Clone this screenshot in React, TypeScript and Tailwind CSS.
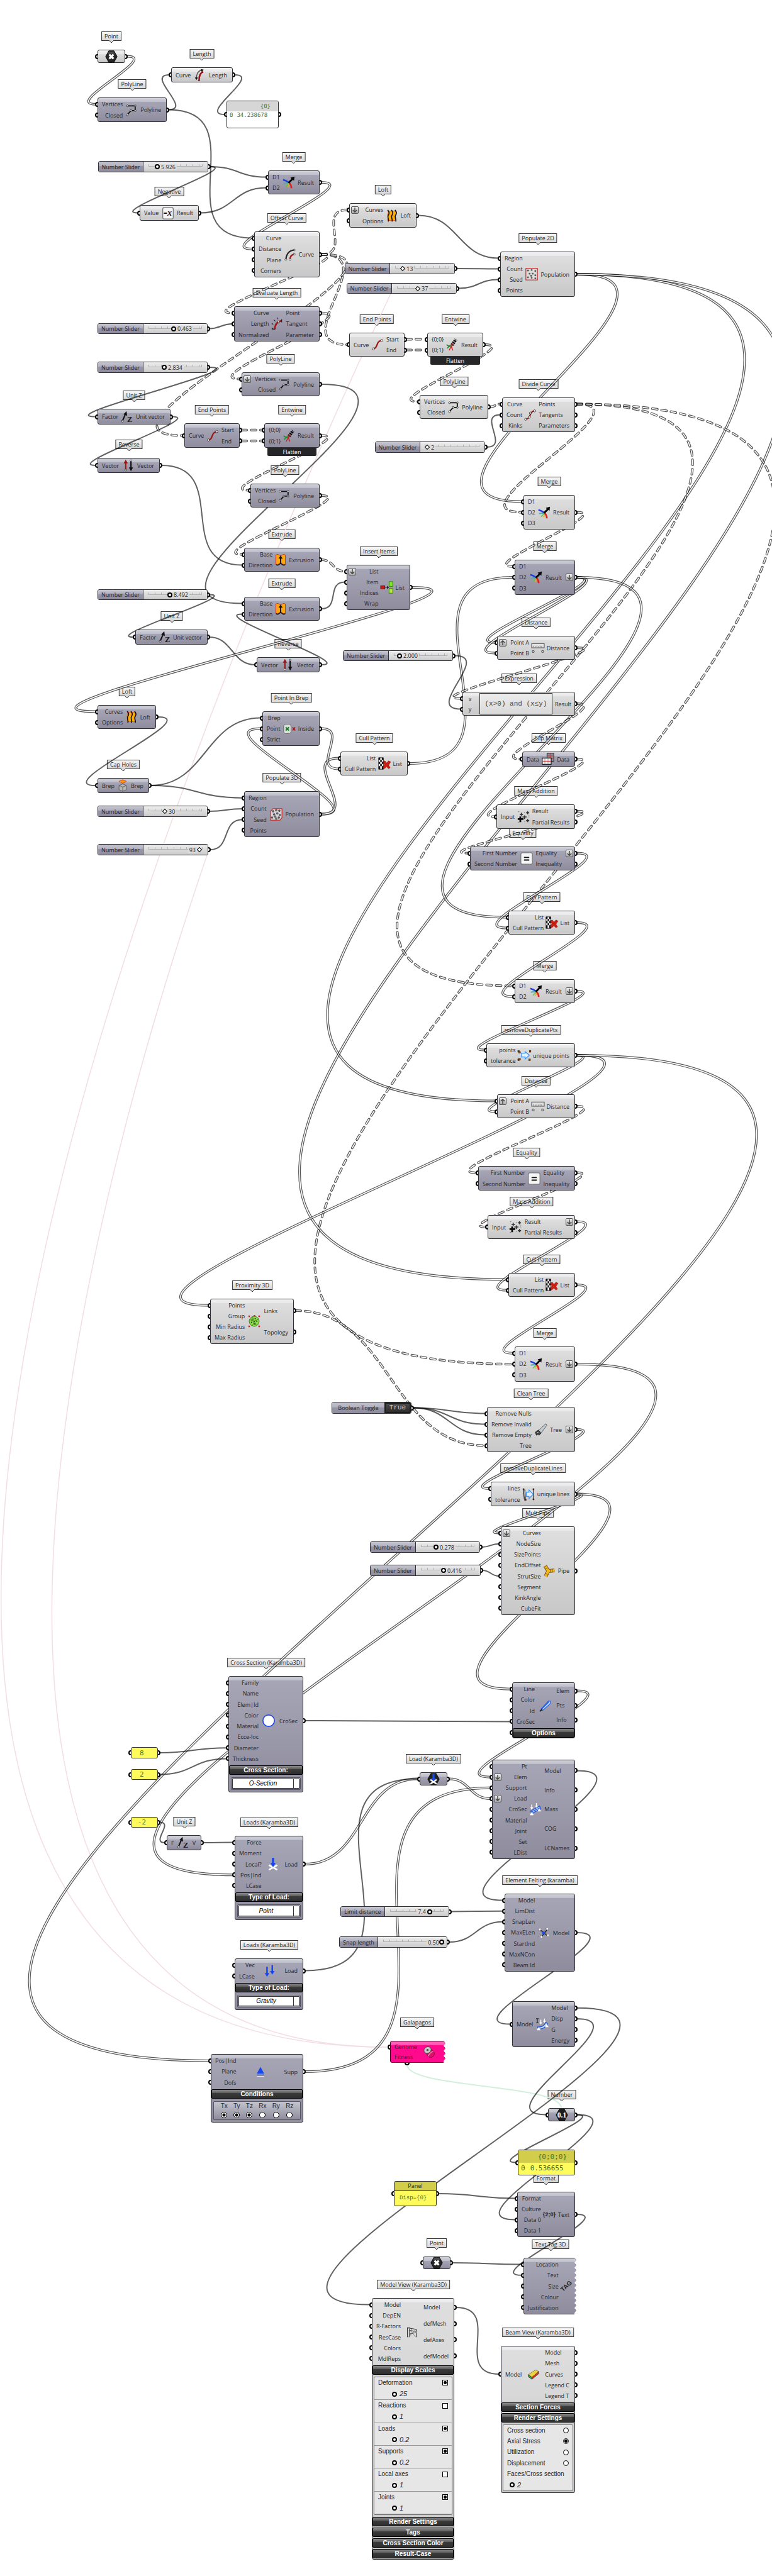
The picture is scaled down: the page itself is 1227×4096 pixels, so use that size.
import type { CSSProperties, ReactNode } from 'react';
import clsx from 'clsx';

/* Graph coordinates are canvas units; ZOOM is the canvas zoom level. */
const ZOOM = 0.818;
const px = (v: number) => Math.round(v * ZOOM);

type Box = { x: number; y: number; w: number; h: number };
type Tone = 'light' | 'dark';

const box = (x1: number, y1: number, x2: number, y2: number): Box => ({
  x: px(x1),
  y: px(y1),
  w: px(x2) - px(x1),
  h: px(y2) - px(y1),
});

const place = (b: Box): CSSProperties => ({ left: b.x, top: b.y, width: b.w, height: b.h });

/* ------------------------------------------------------------------ icons */

const dot = (x: number, y: number, r = 1.7) => (
  <circle cx={x} cy={y} r={r} fill="#fff" stroke="#222" strokeWidth="1" />
);

const HEX = 'M7 1h10l6 11-6 11H7L1 12z';

const icons: Record<string, ReactNode> = {
  point: (
    <>
      <path d={HEX} fill="#262626" stroke="#000" />
      <path d="M7.5 2h9l2.5 5H5z" fill="#666" opacity=".6" />
      <path d="M8 8l8 8M16 8l-8 8" stroke="#fff" strokeWidth="4" />
    </>
  ),
  loadHex: (
    <>
      <path d={HEX} fill="#222" stroke="#000" />
      <path d="M6 21l12-8M18 21L6 13" stroke="#fff" strokeWidth="3" />
      <path d="M10 2h4v8h3l-5 6-5-6h3z" fill="#1746f0" />
    </>
  ),
  number: (
    <>
      <path d={HEX} fill="#1c1c1c" stroke="#000" />
      <text x="12" y="17" textAnchor="middle" fontSize="14" fontWeight="700" fontFamily="Liberation Serif, serif" fill="#fff">0.1</text>
    </>
  ),
  length: (
    <>
      <path d="M14 3C8 5 5 11 5 19" fill="none" stroke="#555" strokeWidth="1.6" />
      <path d="M13 1l6 1-4 4zM2 17h6l-3 5z" fill="#111" />
      <path d="M10 23c0-9 2-15 8-17" fill="none" stroke="#9b1515" strokeWidth="3" />
      <path d="M8 23h4M17 4v4" stroke="#5a0b0b" />
    </>
  ),
  polyline: (
    <>
      <path d="M4 4h15v9h-8L4 21" fill="none" stroke="#111" strokeWidth="2.2" />
      {dot(4, 4)}{dot(19, 4)}{dot(19, 13)}{dot(11, 13)}{dot(4, 21)}
    </>
  ),
  merge: (
    <>
      <path d="M1 7c4 1 8 3 12 6" fill="none" stroke="#1d3fe0" strokeWidth="3" />
      <path d="M2 14c4-1 7-1 10 0" fill="none" stroke="#4fb0a8" strokeWidth="2.4" />
      <path d="M6 20c2-3 4-5 7-6" fill="none" stroke="#6cc24a" strokeWidth="2" />
      <path d="M11 21l2-7" fill="none" stroke="#e8b01c" strokeWidth="2" />
      <path d="M17 23c0-4-1-7-4-10" fill="none" stroke="#e02018" strokeWidth="3" />
      <path d="M10 12l7-7-2-2 8-2-1 8-2-2-7 7z" fill="#080808" />
    </>
  ),
  negative: (
    <>
      <rect x="2" y="1" width="20" height="22" rx="3" fill="#f4f4f4" stroke="#777" strokeWidth="1.5" />
      <path d="M4 12h6" stroke="#111" strokeWidth="2.4" />
      <text x="15" y="17" textAnchor="middle" fontSize="17" fontStyle="italic" fontWeight="700" fontFamily="Liberation Serif, serif" fill="#111">x</text>
    </>
  ),
  offset: (
    <>
      <path d="M4 21C5 11 10 4 20 3" fill="none" stroke="#222" strokeWidth="2.6" />
      <path d="M12 21c0-5 3-9 8-10" fill="none" stroke="#a01818" strokeWidth="2.6" />
      {dot(4, 21)}{dot(20, 3)}{dot(12, 21)}{dot(20, 11)}
    </>
  ),
  loft: (
    <>
      <path d="M4 3c3 3-2 6 0 9s-1 6 0 9h14c3-3-2-6 0-9s3-6 0-9z" fill="#ffab0a" stroke="#e0541a" />
      <path d="M4 1c2 4 4 5 1 10s2 6 0 12M11 1c2 4 4 5 1 10s2 6 0 12M18 1c2 4 4 5 1 10s2 6 0 12" fill="none" stroke="#111" strokeWidth="2" />
    </>
  ),
  evaluate: (
    <>
      <path d="M7 22c0-8 3-14 13-16" fill="none" stroke="#a01818" strokeWidth="3" />
      <path d="M4 20l-3 2M4 13l-3-2M8 7L5 4M13 3l-1-3M2 22h6M20 3v6" stroke="#222" strokeWidth="1.4" />
      {dot(14, 8)}
    </>
  ),
  endPoints: (
    <>
      <path d="M4 20c10-1 4-15 16-16" fill="none" stroke="#9b1515" strokeWidth="2.6" />
      {dot(4, 20, 2)}{dot(20, 4, 2)}
    </>
  ),
  divide: (
    <>
      <path d="M3 20c11-1 6-15 17-16" fill="none" stroke="#9b1515" strokeWidth="2.6" />
      {dot(3, 20, 2)}{dot(10, 16, 2)}{dot(12, 8, 2)}{dot(20, 4, 2)}
    </>
  ),
  entwine: (
    <>
      <path d="M11 13l8-11" stroke="#111" strokeWidth="6" strokeDasharray="3 1.2" />
      <path d="M9 15l5-6" stroke="#b01c1c" strokeWidth="4" strokeDasharray="2 1.5" />
      <path d="M1 12c3 4 6 2 9 2M2 19c3-5 6-4 8-5" fill="none" stroke="#1e8a2c" strokeWidth="2" />
      <path d="M6 23c1-4 3-5 4-8 1 3 1 5 3 8" fill="none" stroke="#d02020" strokeWidth="1.8" />
    </>
  ),
  populate: (
    <>
      <rect x="1" y="1" width="22" height="22" fill="#dcdcdc" stroke="#c22" strokeWidth="1.4" />
      {[[5, 5], [12, 4], [19, 6], [8, 11], [14, 11], [19, 14], [5, 18], [12, 19], [19, 20], [11, 15]].map(([x, y]) => (
        <circle key={`${x}-${y}`} cx={x} cy={y} r="1.7" fill="#555" />
      ))}
    </>
  ),
  populate3: (
    <>
      <path d="M6 1h17v17l-4 5H1V6z" fill="#d4d4d8" stroke="#c22" strokeWidth="1.4" />
      {[[6, 6], [12, 4], [18, 5], [8, 12], [14, 10], [19, 13], [4, 18], [12, 20], [17, 18], [10, 16]].map(([x, y]) => (
        <circle key={`${x}-${y}`} cx={x} cy={y} r="1.7" fill="#777" stroke="#222" strokeWidth=".7" />
      ))}
    </>
  ),
  unitZ: (
    <>
      <path d="M3 20L9 6" stroke="#111" strokeWidth="2.4" />
      <path d="M5 7l6-6 1 9z" fill="#111" />
      {dot(3, 20, 1.8)}
      <text x="17" y="22" textAnchor="middle" fontSize="15" fontWeight="700" fontFamily="Liberation Serif, serif" fill="#1d1d1d">Z</text>
    </>
  ),
  reverse: (
    <>
      <path d="M7 20V6" stroke="#9b1515" strokeWidth="2.6" />
      <path d="M3 8l4-7 4 7z" fill="#9b1515" />
      <path d="M17 4v14" stroke="#111" strokeWidth="2.6" />
      <path d="M13 16l4 7 4-7z" fill="#111" />
      {dot(7, 21)}{dot(17, 3)}
    </>
  ),
  extrude: (
    <>
      <path d="M3 3q3-3 6 0t6 0 6 0v17q-3 3-6 0t-6 0-6 0z" fill="#ffa50e" stroke="#c9341a" strokeWidth="1.2" />
      <path d="M3 21q3 3 6 0t6 0 6 0" fill="none" stroke="#111" strokeWidth="2" />
      <path d="M12 20V9" stroke="#111" strokeWidth="2.4" />
      <path d="M8 10l4-6 4 6z" fill="#111" />
    </>
  ),
  insert: (
    <>
      <rect x="0" y="9" width="8" height="6" fill="#c81c1c" stroke="#5c0c0c" />
      <path d="M8 12h6" stroke="#222" />
      <path d="M12 9l4 3-4 3z" fill="#222" />
      <rect x="16" y="1" width="7" height="9" fill="#7ee81c" stroke="#2d7a0a" />
      <rect x="16" y="14" width="7" height="9" fill="#b8e83c" stroke="#2d7a0a" />
    </>
  ),
  cap: (
    <>
      <path d="M5 4l7-3 7 3-7 4z" fill="#ff9a10" stroke="#c9341a" />
      <path d="M5 12l7-3 7 3v8l-7 3-7-3z" fill="#b5b5b5" stroke="#555" />
      <path d="M5 12l7 3 7-3M12 15v8" fill="none" stroke="#555" />
    </>
  ),
  pointInBrep: (
    <>
      <rect x="1" y="3" width="14" height="18" rx="4" fill="#d9dde0" stroke="#555" />
      <path d="M5 9l6 6M11 9l-6 6" stroke="#157a15" strokeWidth="2.4" />
      <path d="M18 9l5 6M23 9l-5 6" stroke="#a01818" strokeWidth="2.2" />
    </>
  ),
  cull: (
    <>
      <path d="M1 1h9v22H1z" fill="#fff" stroke="#111" />
      <path d="M1 1h3v4H1zM7 1h3v4H7zM4 5h3v4H4zM1 9h3v4H1zM7 9h3v4H7zM4 13h3v4H4zM1 17h3v6H1zM7 17h3v6H7z" fill="#111" />
      <path d="M9 8l4-1 3 4 4-4 4 2-4 6 3 5-3 2-4-4-4 4-3-2 3-6z" fill="#cf1d12" stroke="#7a0b06" strokeWidth=".6" />
    </>
  ),
  distance: (
    <>
      <rect x="0" y="4" width="24" height="8" fill="#e2e2e2" stroke="#555" strokeWidth="1.3" />
      <path d="M4 8v3M7 9v2M10 8v3M13 9v2M16 8v3M19 9v2" stroke="#555" />
      <circle cx="3" cy="19" r="2" fill="none" stroke="#555" strokeWidth="1.3" />
      <circle cx="21" cy="19" r="2" fill="none" stroke="#555" strokeWidth="1.3" />
    </>
  ),
  flip: (
    <>
      <rect x="10" y="1" width="13" height="15" fill="#8d8d98" stroke="#111" />
      <path d="M16 1v15M10 6h13M10 11h13" stroke="#c22" strokeWidth=".9" />
      <rect x="1" y="10" width="17" height="12" fill="#f3f3f3" stroke="#111" strokeWidth="1.4" />
      <path d="M6 10v12M12 10v12" stroke="#555" strokeWidth=".6" />
      <path d="M2 16h15" stroke="#c22" strokeWidth="1.2" />
    </>
  ),
  mass: (
    <>
      <path d="M6 11v11M1 16h11" stroke="#0b0b0b" strokeWidth="3.4" />
      <path d="M14 9v7M10 12h8M20 1v6M17 4h6M20 16v6M17 19h6M8 4v6M5 7h6" stroke="#333" strokeWidth="2" />
      <path d="M2 2h2M2 22h2M13 4h2M22 12h1M13 20h2M22 9h1" stroke="#777" strokeWidth="1.6" />
    </>
  ),
  equality: (
    <>
      <rect x="1" y="1" width="22" height="22" rx="3" fill="#f5f5f5" stroke="#777" strokeWidth="1.5" />
      <path d="M7 10h10M7 15h10" stroke="#111" strokeWidth="2.2" />
    </>
  ),
  dupPts: (
    <>
      <path d="M7 8h7V5l8 7-8 7v-4H7z" fill="#e6f1ff" stroke="#3f93ee" strokeWidth="1.5" />
      {[[0, 3], [2, 5], [22, 3], [0, 19], [2, 18], [21, 19]].map(([x, y]) => (
        <rect key={`${x}-${y}`} x={x} y={y} width="3" height="3" fill="#8a4a14" stroke="#2b1505" strokeWidth=".7" />
      ))}
    </>
  ),
  dupLines: (
    <>
      <path d="M2 2l2 19M5 3l1 19M22 2v19" stroke="#222" strokeWidth="1.5" />
      <path d="M8 8h5V4l8 8-8 8v-4H8z" fill="#e6f1ff" stroke="#3f93ee" strokeWidth="1.5" />
      <path d="M1 1h3v3H1zM4 21h4v3H4zM20 1h3v3h-3zM20 20h3v3h-3z" fill="#4a1c10" />
    </>
  ),
  proximity: (
    <>
      <path d="M1 1h3v3H1zM20 1h3v3h-3zM1 20h3v3H1zM20 20h3v3h-3zM11 0h3v3h-3z" fill="#d42020" />
      <circle cx="12" cy="12" r="9.5" fill="#8fdc4a" stroke="#2d6b10" />
      <path d="M4 9l8 3 8-4M12 12l-3 8M12 12l4 7M12 12L9 4" stroke="#2d6b10" fill="none" />
      {[[8, 8], [14, 7], [17, 12], [7, 14], [13, 17], [12, 12]].map(([x, y]) => (
        <circle key={`${x}-${y}`} cx={x} cy={y} r="1.3" fill="#23500c" />
      ))}
    </>
  ),
  saw: (
    <>
      <path d="M7 14L21 1l2 3L11 20z" fill="#c5cbd2" stroke="#444" />
      <path d="M1 17l6-4 5 6-4 4-2-2-3 2z" fill="#3c4046" stroke="#222" />
      <path d="M4 18l3-1" stroke="#fff" />
    </>
  ),
  multiPipe: (
    <>
      <path d="M4 2l6 10M10 12l12-1M10 12L5 22" stroke="#6e4b06" strokeWidth="7" />
      <path d="M4 2l6 10M10 12l12-1M10 12L5 22" stroke="#f5b81c" strokeWidth="5" />
      <path d="M2 5l5-3M4 9l5-3M14 9v5M18 8v6M4 16l5 3" stroke="#6e4b06" />
    </>
  ),
  ring: <circle cx="12" cy="12" r="11" fill="#fff" stroke="#1d46e8" strokeWidth="2" />,
  pointLoad: (
    <>
      <path d="M4 23l16-9M20 23L4 14" stroke="#fff" strokeWidth="3.2" />
      <path d="M10 0h4v10h3l-5 8-5-8h3z" fill="#1746f0" />
    </>
  ),
  gravity: <path d="M5 4h3v12h3l-4.5 7L2 16h3zM15 1h3v11h3l-4.5 7L12 12h3z" fill="#1746f0" />,
  support: (
    <>
      <path d="M12 3l7 13H5z" fill="#1746f0" />
      <path d="M5 18.5h14" stroke="#1746f0" strokeWidth="1.6" />
      <path d="M5 21h14" stroke="#e8e8ee" strokeWidth="1.6" />
    </>
  ),
  galapagos: (
    <>
      <ellipse cx="15" cy="15" rx="7" ry="7" fill="#e0146e" stroke="#5c0a2c" />
      <path d="M10 20c3-6 7-9 10-9" stroke="#fff" fill="none" />
      <ellipse cx="9" cy="8" rx="7" ry="6" fill="#c9c9c9" stroke="#444" transform="rotate(-30 9 8)" />
      <circle cx="9" cy="8" r="2" fill="#444" />
    </>
  ),
  beam: (
    <>
      <path d="M3 19L18 3l4 1-1 4L7 21z" fill="#cfe0ff" stroke="#2b62e0" strokeWidth="1.4" />
      <path d="M5 18L19 4" stroke="#2b62e0" strokeWidth="2.4" />
      <path d="M1 23l5-4" stroke="#111" strokeWidth="2" />
    </>
  ),
  assemble: (
    <>
      <path d="M3 15L20 6l2 5-17 9z" fill="#cfe0ff" stroke="#1d50e0" strokeWidth="1.5" />
      <path d="M4 17l17-8" stroke="#1d50e0" strokeWidth="1.5" />
      <path d="M5 3v6M14 0v6" stroke="#fff" strokeWidth="1.8" />
      <path d="M2 8h6l-3 5zM11 5h6l-3 4zM5 17l4 6H1zM19 10l4 6h-7z" fill="#fff" />
    </>
  ),
  felting: (
    <>
      <path d="M1 20l22-14M1 8l22 8M8 22L17 2" stroke="#777" strokeWidth="1" strokeDasharray="3 1.5" />
      <path d="M5 6l14 12M19 6L8 20" stroke="#222" strokeWidth="1.8" />
      <circle cx="12" cy="12.5" r="2.8" fill="#1746f0" />
      {[[5, 6], [19, 5], [20, 17], [8, 20]].map(([x, y]) => (
        <rect key={`${x}-${y}`} x={x - 1.5} y={y - 1.5} width="3" height="3" fill="#fff" />
      ))}
    </>
  ),
  analyze: (
    <>
      <path d="M3 17c8 0 12-2 16-9l3 3c-4 7-9 10-17 10z" fill="#cfe0ff" stroke="#1d50e0" strokeWidth="1.5" />
      <path d="M9 3v6M16 1v5" stroke="#fff" strokeWidth="1.8" />
      <path d="M6 8h6l-3 4zM13 5h6l-3 4zM5 17l4 6H1zM20 11l4 6h-7z" fill="#fff" />
      <path d="M0 1h5M2.5 1v8M0 9h5" stroke="#222" strokeWidth="1.3" />
    </>
  ),
  format: (
    <text x="12" y="16" textAnchor="middle" fontSize="11" fontWeight="700" fontFamily="Liberation Sans, sans-serif" fill="#222">{'{2;0}'}</text>
  ),
  tag: (
    <text x="12" y="16" textAnchor="middle" fontSize="12" fontWeight="700" fontFamily="Liberation Sans, sans-serif" fill="#222" transform="rotate(-42 12 12)">TAG</text>
  ),
  modelView: (
    <>
      <path d="M3 22V4h4v18M3 4l17 3v4L7 9M7 16l13-3v9" fill="none" stroke="#333" strokeWidth="1.3" />
      <path d="M5 4l14 18M19 7L5 22" stroke="#777" />
      <rect x="7" y="6" width="3" height="3" fill="#fff" stroke="#333" strokeWidth=".8" />
    </>
  ),
  beamView: (
    <>
      <path d="M2 13l14-9 6 3-13 11z" fill="#f0d43a" stroke="#555" strokeWidth=".8" />
      <path d="M2 13l7 5v4l-7-5z" fill="#38a047" stroke="#333" strokeWidth=".8" />
      <path d="M9 18l13-11v4L9 22z" fill="#d83a2a" stroke="#333" strokeWidth=".8" />
    </>
  ),
};

const Icon = ({ name, wide }: { name: string; wide?: boolean }) => (
  <svg viewBox="0 0 24 24" aria-hidden="true" className={clsx('h-5 shrink-0 overflow-visible', wide ? 'w-6' : 'w-5')}>
    {icons[name]}
  </svg>
);

/* ------------------------------------------------------------------- data */

type NodeSpec = {
  id: string;
  box: Box;
  body: number;
  tone: Tone;
  tag?: string;
  icon: string;
  ins: string[];
  outs: string[];
  flatIn: number[];
  graftIn: number[];
  flatOut: number[];
  torn: boolean;
};

type Extra = { flatIn?: number[]; graftIn?: number[]; flatOut?: number[]; body?: number; torn?: boolean };

const node = (
  id: string,
  tone: Tone,
  tag: string | undefined,
  r: [number, number, number, number],
  ins: string[],
  icon: string,
  outs: string[],
  e: Extra = {},
): NodeSpec => {
  const b = box(...r);
  return {
    id, tone, tag, icon, ins, outs, box: b,
    body: e.body ? px(e.body) : b.h,
    flatIn: e.flatIn ?? [],
    graftIn: e.graftIn ?? [],
    flatOut: e.flatOut ?? [],
    torn: e.torn ?? false,
  };
};

const R = 1117.3;

const nodes: NodeSpec[] = [
  node('pt1', 'light', 'Point', [189.6, 96, 242.8, 121.7], [''], 'point', ['']),
  node('len', 'light', 'Length', [333, 131, 452.6, 160.7], ['Curve'], 'length', ['Length']),
  node('pl1', 'dark', 'PolyLine', [189.6, 190, 323.6, 236.7], ['Vertices', 'Closed'], 'polyline', ['Polyline']),
  node('mrg1', 'dark', 'Merge', [520.4, 331, 621, 377.7], ['D1', 'D2'], 'merge', ['Result']),
  node('neg', 'light', 'Negative', [271.8, 398.3, 386, 428.7], ['Value'], 'negative', ['Result']),
  node('off', 'light', 'Offset Curve', [494, 450.3, 621, 539], ['Curve', 'Distance', 'Plane', 'Corners'], 'offset', ['Curve']),
  node('loft1', 'light', 'Loft', [678.5, 395.3, 809.7, 442.3], ['Curves', 'Options'], 'loft', ['Loft'], { flatIn: [0] }),
  node('pop2', 'light', 'Populate 2D', [971.4, 488.6, 1117.2, 577.3], ['Region', 'Count', 'Seed', 'Points'], 'populate', ['Population']),
  node('evl', 'dark', 'Evaluate Length', [455.3, 595.7, 621, 663.3], ['Curve', 'Length', 'Normalized'], 'evaluate', ['Point', 'Tangent', 'Parameter']),
  node('ep2', 'light', 'End Points', [678.2, 646.6, 786.6, 692.6], ['Curve'], 'endPoints', ['Start', 'End']),
  node('ent2', 'light', 'Entwine', [830, 646.6, 938.3, 692.6], ['{0;0}', '{0;1}'], 'entwine', ['Result']),
  node('pl2', 'light', 'PolyLine', [814.8, 767.6, 949.2, 814], ['Vertices', 'Closed'], 'polyline', ['Polyline']),
  node('div', 'light', 'Divide Curve', [975.7, 773, 1117.2, 840.2], ['Curve', 'Count', 'Kinks'], 'divide', ['Points', 'Tangents', 'Parameters']),
  node('pl3', 'dark', 'PolyLine', [470, 724, 621, 770.7], ['Vertices', 'Closed'], 'polyline', ['Polyline'], { flatIn: [0] }),
  node('uz1', 'dark', 'Unit Z', [189.6, 794.7, 331, 824.7], ['Factor'], 'unitZ', ['Unit vector']),
  node('ep1', 'dark', 'End Points', [358, 823.3, 466, 870], ['Curve'], 'endPoints', ['Start', 'End']),
  node('ent1', 'dark', 'Entwine', [513, 823.3, 621, 870], ['{0;0}', '{0;1}'], 'entwine', ['Result']),
  node('rev1', 'dark', 'Reverse', [189.6, 889.7, 311, 919.7], ['Vector'], 'reverse', ['Vector']),
  node('pl4', 'dark', 'PolyLine', [486.5, 940, 621, 986.7], ['Vertices', 'Closed'], 'polyline', ['Polyline']),
  node('mrg2', 'light', 'Merge', [1016.7, 962.3, R, 1029.6], ['D1', 'D2', 'D3'], 'merge', ['Result']),
  node('ext1', 'dark', 'Extrude', [474.4, 1064.3, 621, 1111.3], ['Base', 'Direction'], 'extrude', ['Extrusion']),
  node('ext2', 'dark', 'Extrude', [474.4, 1160.4, 621, 1207], ['Base', 'Direction'], 'extrude', ['Extrusion']),
  node('ins', 'dark', 'Insert Items', [673.2, 1097.6, 796.7, 1186], ['List', 'Item', 'Indices', 'Wrap'], 'insert', ['List'], { flatIn: [0] }),
  node('mrg3', 'dark', 'Merge', [1000, 1088.6, R, 1156.3], ['D1', 'D2', 'D3'], 'merge', ['Result'], { flatOut: [0] }),
  node('uz2', 'dark', 'Unit Z', [262.3, 1223.2, 404, 1253.6], ['Factor'], 'unitZ', ['Unit vector']),
  node('rev2', 'dark', 'Reverse', [499.2, 1277.5, 621, 1307], ['Vector'], 'reverse', ['Vector']),
  node('dist1', 'light', 'Distance', [966, 1235.9, R, 1282.6], ['Point A', 'Point B'], 'distance', ['Distance'], { graftIn: [0] }),
  node('loft2', 'dark', 'Loft', [189.3, 1370.3, 303.6, 1416.8], ['Curves', 'Options'], 'loft', ['Loft']),
  node('pib', 'dark', 'Point In Brep', [510.2, 1383, 621, 1450.2], ['Brep', 'Point', 'Strict'], 'pointInBrep', ['Inside']),
  node('cull0', 'light', 'Cull Pattern', [661.3, 1460.4, 791.7, 1507.4], ['List', 'Cull Pattern'], 'cull', ['List']),
  node('flip', 'dark', 'Flip Matrix', [1015, 1460.6, R, 1490.5], ['Data'], 'flip', ['Data']),
  node('cap', 'dark', 'Cap Holes', [189.3, 1512, 289.8, 1542], ['Brep'], 'cap', ['Brep']),
  node('pop3', 'dark', 'Populate 3D', [474.9, 1537.8, 621, 1626.7], ['Region', 'Count', 'Seed', 'Points'], 'populate3', ['Population']),
  node('mass1', 'light', 'Mass Addition', [964.3, 1563.7, R, 1610.7], ['Input'], 'mass', ['Result', 'Partial Results']),
  node('eq1', 'dark', 'Equality', [912.7, 1645.5, R, 1691.8], ['First Number', 'Second Number'], 'equality', ['Equality', 'Inequality'], { flatOut: [0] }),
  node('cull1', 'light', 'Cull Pattern', [987.3, 1770.5, R, 1817], ['List', 'Cull Pattern'], 'cull', ['List']),
  node('mrg4', 'light', 'Merge', [1000, 1903.3, R, 1950], ['D1', 'D2'], 'merge', ['Result'], { flatOut: [0] }),
  node('rdp', 'light', 'removeDuplicatePts', [945.3, 2027.9, R, 2074], ['points', 'tolerance'], 'dupPts', ['unique points']),
  node('dist2', 'light', 'Distance', [966, 2127.5, R, 2174.2], ['Point A', 'Point B'], 'distance', ['Distance'], { graftIn: [0] }),
  node('eq2', 'dark', 'Equality', [929.3, 2266.8, R, 2313.6], ['First Number', 'Second Number'], 'equality', ['Equality', 'Inequality']),
  node('mass2', 'light', 'Mass Addition', [947, 2361.8, R, 2408.2], ['Input'], 'mass', ['Result', 'Partial Results'], { flatOut: [0] }),
  node('cull2', 'light', 'Cull Pattern', [987.3, 2474.6, R, 2521], ['List', 'Cull Pattern'], 'cull', ['List']),
  node('prox', 'light', 'Proximity 3D', [408.4, 2524, 570.5, 2612.3], ['Points', 'Group', 'Min Radius', 'Max Radius'], 'proximity', ['Links', 'Topology']),
  node('mrg5', 'light', 'Merge', [1000, 2617.5, R, 2685.7], ['D1', 'D2', 'D3'], 'merge', ['Result'], { flatOut: [0] }),
  node('clean', 'light', 'Clean Tree', [946.2, 2735, R, 2823.2], ['Remove Nulls', 'Remove Invalid', 'Remove Empty', 'Tree'], 'saw', ['Tree'], { flatOut: [0] }),
  node('rdl', 'light', 'removeDuplicateLines', [953.6, 2880.8, R, 2927.5], ['lines', 'tolerance'], 'dupLines', ['unique lines']),
  node('mp', 'light', 'MultiPipe', [972.5, 2966.7, R, 3139], ['Curves', 'NodeSize', 'SizePoints', 'EndOffset', 'StrutSize', 'Segment', 'KinkAngle', 'CubeFit'], 'multiPipe', ['Pipe'], { flatIn: [0] }),
  node('crs', 'dark', 'Cross Section (Karamba3D)', [443.3, 3258.3, 589.3, 3484.3], ['Family', 'Name', 'Elem|Id', 'Color', 'Material', 'Ecce-loc', 'Diameter', 'Thickness'], 'ring', ['CroSec'], { body: 173.5 }),
  node('ltb', 'dark', undefined, [994.6, 3270, 1117, 3378.7], ['Line', 'Color', 'Id', 'CroSec'], 'beam', ['Elem', 'Pts', 'Info'], { body: 89 }),
  node('loadp', 'dark', 'Load (Karamba3D)', [815.4, 3444.7, 868.6, 3470.4], [''], 'loadHex', ['']),
  node('asm', 'dark', undefined, [955.7, 3421, 1117, 3614.3], ['Pt', 'Elem', 'Support', 'Load', 'CroSec', 'Material', 'Joint', 'Set', 'LDist'], 'assemble', ['Model', 'Info', 'Mass', 'COG', 'LCNames'], { flatIn: [1, 3] }),
  node('uz3', 'dark', 'Unit Z', [324.3, 3567, 391.3, 3596.7], ['F'], 'unitZ', ['V']),
  node('ld1', 'dark', 'Loads (Karamba3D)', [455.6, 3569, 589.4, 3731.7], ['Force', 'Moment', 'Local?', 'Pos|Ind', 'LCase'], 'pointLoad', ['Load'], { body: 110.2 }),
  node('felt', 'dark', 'Element Felting (karamba)', [980, 3680.8, 1117, 3832.6], ['Model', 'LimDist', 'SnapLen', 'MaxELen', 'StartInd', 'MaxNCon', 'Beam Id'], 'felting', ['Model']),
  node('ld2', 'dark', 'Loads (Karamba3D)', [455.6, 3807, 589.4, 3906.7], ['Vec', 'LCase'], 'gravity', ['Load'], { body: 47.5 }),
  node('ana', 'dark', undefined, [995.4, 3890.3, R, 3979.3], ['Model'], 'analyze', ['Model', 'Disp', 'G', 'Energy']),
  node('supp', 'dark', undefined, [410, 3992.5, 589.4, 4125.7], ['Pos|Ind', 'Plane', 'Dofs'], 'support', ['Supp'], { body: 68.5 }),
  node('num', 'dark', 'Number', [1064.2, 4098.3, R, 4123], [''], 'number', ['']),
  node('fmt', 'dark', 'Format', [1005.4, 4260.4, R, 4349], ['Format', 'Culture', 'Data 0', 'Data 1'], 'format', ['Text']),
  node('pt2', 'dark', 'Point', [821.8, 4385.8, 874.8, 4411], [''], 'point', ['']),
  node('ttag', 'dark', 'Text Tag 3D', [1016.7, 4389.3, 1121.4, 4499], ['Location', 'Text', 'Size', 'Colour', 'Justification'], 'tag', [], { torn: true }),
  node('mv', 'light', 'Model View (Karamba3D)', [722, 4467.6, 882.8, 4975], ['Model', 'DepEN', 'R-Factors', 'ResCase', 'Colors', 'MdlReps'], 'modelView', ['Model', 'defMesh', 'defAxes', 'defModel'], { body: 131 }),
  node('bv', 'light', 'Beam View (Karamba3D)', [973, 4560, R, 4846], ['Model'], 'beamView', ['Model', 'Mesh', 'Curves', 'Legend C', 'Legend T'], { body: 110 }),
];

type SliderSpec = { id: string; box: Box; name: string; nameW: number; knob: number; value: string; diamond: boolean; before: boolean };

const slider = (
  id: string,
  r: [number, number, number, number],
  divider: number,
  knob: number,
  value: string,
  opt: { name?: string; diamond?: boolean; before?: boolean } = {},
): SliderSpec => {
  const b = box(...r);
  return {
    id, value, box: b,
    name: opt.name ?? 'Number Slider',
    nameW: px(divider) - b.x,
    knob: px(knob) - px(divider),
    diamond: opt.diamond ?? false,
    before: opt.before ?? false,
  };
};

const sliders: SliderSpec[] = [
  slider('s1', [190.5, 313.3, 404.8, 334.7], 278, 304.4, '5.926'),
  slider('s2', [669.5, 511.4, 883.6, 532.6], 756.8, 780.6, '13', { diamond: true }),
  slider('s3', [673.3, 549.6, 887.4, 570.7], 760.6, 810, '37', { diamond: true }),
  slider('s4', [189.6, 628.3, 404, 649.7], 277, 336.5, '0.463'),
  slider('s5', [189.6, 703.3, 404, 724.7], 277, 317.8, '2.834'),
  slider('s6', [728, 858, 942, 879.6], 815.3, 828.3, '2', { diamond: true }),
  slider('s7', [189.3, 1145, 404, 1166], 277.4, 328.4, '8.492'),
  slider('s8', [666.8, 1263.8, 880.3, 1285.2], 754.5, 774.7, '2.000'),
  slider('s9', [189.3, 1566.4, 404, 1587.8], 277.4, 319.2, '30', { diamond: true }),
  slider('s10', [190, 1640.8, 405, 1662], 278, 386.7, '93', { diamond: true, before: true }),
  slider('s11', [718.3, 2996.9, 933.2, 3018.6], 806.4, 845.7, '0.278'),
  slider('s12', [719.3, 3042, 934.2, 3064], 807, 861, '0.416'),
  slider('s13', [661.8, 3704.9, 872.5, 3726.6], 746.4, 833.2, '7.4', { name: 'Limit distance', before: true }),
  slider('s14', [658.6, 3764.2, 869.3, 3785.6], 733.6, 859, '0.50', { name: 'Snap length', before: true }),
];

const plain: Record<string, Box> = {
  panel1: box(440, 196, 541, 249.7),
  expr: box(899, 1344.9, R, 1391.6),
  bool: box(644.7, 2725, 799, 2748.6),
  y8: box(253.7, 3396.3, 307, 3418),
  y2: box(253.7, 3438.3, 307, 3460),
  ym: box(253.7, 3531.3, 307, 3552.7),
  gal: box(757.4, 3967, 867.3, 4010),
  ypan: box(1006.4, 4179, R, 4228.8),
  ppan: box(765, 4239.5, 848.7, 4289),
};

/* ------------------------------------------------------------------ wires */

const portY = (h: number, count: number, i: number) => 2 + ((i + 0.5) * (h - 4)) / count;

type Ports = { box: Box; body: number; nIn: number; nOut: number };
const ports: Record<string, Ports> = {};
nodes.forEach((n) => { ports[n.id] = { box: n.box, body: n.body, nIn: n.ins.length, nOut: n.outs.length }; });
sliders.forEach((s) => { ports[s.id] = { box: s.box, body: s.box.h, nIn: 0, nOut: 1 }; });
Object.entries(plain).forEach(([id, b]) => { ports[id] = { box: b, body: b.h, nIn: id === 'expr' ? 2 : 1, nOut: 1 }; });

type Kind = 'item' | 'list' | 'tree';
type Wire = [from: string, out: number, to: string, input: number, kind: Kind, bend?: number];

const wires: Wire[] = [
  ['pt1', 0, 'pl1', 0, 'list'],
  ['pl1', 0, 'len', 0, 'item'],
  ['len', 0, 'panel1', 0, 'item'],
  ['pl1', 0, 'off', 0, 'item'],
  ['s1', 0, 'mrg1', 0, 'item'],
  ['s1', 0, 'neg', 0, 'item'],
  ['neg', 0, 'mrg1', 1, 'item'],
  ['mrg1', 0, 'off', 1, 'list'],
  ['off', 0, 'loft1', 0, 'tree'],
  ['off', 0, 'evl', 0, 'tree'],
  ['off', 0, 'ep2', 0, 'tree'],
  ['off', 0, 'ep1', 0, 'tree'],
  ['loft1', 0, 'pop2', 0, 'item'],
  ['s2', 0, 'pop2', 1, 'item'],
  ['s3', 0, 'pop2', 2, 'item'],
  ['s4', 0, 'evl', 1, 'item'],
  ['evl', 0, 'pl3', 0, 'tree'],
  ['s5', 0, 'uz1', 0, 'item'],
  ['uz1', 0, 'rev1', 0, 'item'],
  ['ep1', 0, 'ent1', 0, 'tree'],
  ['ep1', 1, 'ent1', 1, 'tree'],
  ['ep2', 0, 'ent2', 0, 'tree'],
  ['ep2', 1, 'ent2', 1, 'tree'],
  ['ent1', 0, 'pl4', 0, 'tree'],
  ['ent2', 0, 'pl2', 0, 'tree'],
  ['pl2', 0, 'div', 0, 'tree'],
  ['s6', 0, 'div', 1, 'item'],
  ['pl3', 0, 'ext2', 0, 'item'],
  ['pl4', 0, 'ext1', 0, 'tree'],
  ['rev1', 0, 'ext1', 1, 'item'],
  ['s7', 0, 'uz2', 0, 'item'],
  ['uz2', 0, 'rev2', 0, 'item'],
  ['rev2', 0, 'ext2', 1, 'item'],
  ['ext1', 0, 'ins', 0, 'tree'],
  ['ext2', 0, 'ins', 1, 'item'],
  ['ins', 0, 'loft2', 0, 'list'],
  ['loft2', 0, 'cap', 0, 'item'],
  ['cap', 0, 'pib', 0, 'item'],
  ['cap', 0, 'pop3', 0, 'item'],
  ['s9', 0, 'pop3', 1, 'item'],
  ['s10', 0, 'pop3', 2, 'item'],
  ['pop3', 0, 'pib', 1, 'list'],
  ['pop3', 0, 'cull0', 0, 'list'],
  ['pib', 0, 'cull0', 1, 'list'],
  ['cull0', 0, 'mrg3', 1, 'list'],
  ['pop2', 0, 'mrg2', 0, 'list'],
  ['pop2', 0, 'dist2', 0, 'list', 0.74],
  ['pop2', 0, 'cull2', 0, 'list', 0.74],
  ['div', 0, 'mrg2', 1, 'tree'],
  ['div', 0, 'mrg4', 0, 'tree', 0.73],
  ['div', 0, 'mrg5', 1, 'tree', 0.74],
  ['mrg2', 0, 'mrg3', 0, 'tree'],
  ['mrg3', 0, 'dist1', 0, 'list'],
  ['mrg3', 0, 'dist1', 1, 'list'],
  ['mrg3', 0, 'cull1', 0, 'list', 0.73],
  ['dist1', 0, 'expr', 0, 'tree'],
  ['s8', 0, 'expr', 1, 'item'],
  ['expr', 0, 'flip', 0, 'tree'],
  ['flip', 0, 'mass1', 0, 'tree'],
  ['mass1', 0, 'eq1', 0, 'tree'],
  ['eq1', 0, 'cull1', 1, 'list'],
  ['cull1', 0, 'mrg4', 1, 'list'],
  ['mrg4', 0, 'rdp', 0, 'list'],
  ['rdp', 0, 'dist2', 1, 'list'],
  ['rdp', 0, 'prox', 0, 'list'],
  ['rdp', 0, 'supp', 0, 'list', 0.74],
  ['dist2', 0, 'eq2', 0, 'tree'],
  ['eq2', 0, 'mass2', 0, 'tree'],
  ['mass2', 0, 'cull2', 1, 'list'],
  ['cull2', 0, 'mrg5', 0, 'list'],
  ['prox', 0, 'clean', 3, 'tree'],
  ['mrg5', 0, 'ld1', 3, 'list', 0.73],
  ['bool', 0, 'clean', 0, 'item'],
  ['bool', 0, 'clean', 1, 'item'],
  ['bool', 0, 'clean', 2, 'item'],
  ['clean', 0, 'rdl', 0, 'list'],
  ['rdl', 0, 'mp', 0, 'list'],
  ['rdl', 0, 'ltb', 0, 'list'],
  ['s11', 0, 'mp', 1, 'item'],
  ['s12', 0, 'mp', 4, 'item'],
  ['y8', 0, 'crs', 6, 'item'],
  ['y2', 0, 'crs', 7, 'item'],
  ['crs', 0, 'ltb', 3, 'item'],
  ['ym', 0, 'uz3', 0, 'item'],
  ['uz3', 0, 'ld1', 0, 'item'],
  ['ld1', 0, 'loadp', 0, 'list'],
  ['ld2', 0, 'loadp', 0, 'item'],
  ['loadp', 0, 'asm', 3, 'list'],
  ['supp', 0, 'asm', 2, 'list'],
  ['ltb', 0, 'asm', 1, 'list'],
  ['asm', 0, 'felt', 0, 'item'],
  ['s13', 0, 'felt', 1, 'item'],
  ['s14', 0, 'felt', 2, 'item'],
  ['felt', 0, 'ana', 0, 'item'],
  ['ana', 0, 'mv', 0, 'item'],
  ['ana', 1, 'num', 0, 'item'],
  ['num', 0, 'ypan', 0, 'item'],
  ['num', 0, 'fmt', 2, 'item'],
  ['ppan', 0, 'fmt', 0, 'item'],
  ['fmt', 0, 'ttag', 1, 'item'],
  ['pt2', 0, 'ttag', 0, 'item'],
  ['mv', 0, 'bv', 0, 'item'],
];

function wirePath([from, out, to, input, , bend = 0.7]: Wire) {
  const a = ports[from];
  const b = ports[to];
  const x1 = a.box.x + a.box.w + 3;
  const y1 = a.box.y + portY(a.body, a.nOut, out);
  const x2 = b.box.x - 3;
  const y2 = b.box.y + portY(b.body, b.nIn, input);
  const dx = x2 - x1;
  const reach = Math.max(dx > 0 ? dx / 2 : -dx * 0.42, Math.abs(y2 - y1) * bend);
  return `M${x1} ${y1}C${x1 + reach} ${y1} ${x2 - reach} ${y2} ${x2} ${y2}`;
}

function Wires() {
  return (
    <svg className="absolute inset-0 h-full w-full" fill="none" aria-hidden="true">
      <g strokeWidth="1.6">
        <path stroke="#f3dfe3" d={`M${px(759)} ${px(571)}C${px(243)} ${px(1671)} ${px(-645)} ${px(3979)} ${px(752)} ${px(3979)}`} />
        <path stroke="#f3dfe3" d={`M${px(405)} ${px(1655)}C${px(162)} ${px(2362)} ${px(-277)} ${px(3979)} ${px(752)} ${px(3979)}`} />
        <path stroke="#d3efdd" strokeWidth="2" d={`M${px(791)} ${px(4014)}C${px(791)} ${px(4060)} ${px(1091)} ${px(4050)} ${px(1091)} ${px(4098)}`} />
      </g>
      {wires.map((w) => {
        const d = wirePath(w);
        const key = w.slice(0, 4).join('-');
        if (w[4] === 'item') return <path key={key} d={d} stroke="#000" strokeWidth="2" opacity=".62" />;
        const tree = w[4] === 'tree';
        return (
          <g key={key} opacity=".66" strokeLinecap={tree ? 'round' : 'butt'} strokeDasharray={tree ? '8 7' : undefined}>
            <path d={d} stroke="#000" strokeWidth="4" />
            <path d={d} stroke="#fff" strokeWidth="1.6" />
          </g>
        );
      })}
    </svg>
  );
}

/* ------------------------------------------------------------- primitives */

const SHADE: Record<Tone, string> = {
  light: 'bg-[linear-gradient(#f2f2f2,#e8e8e8_6px,#dedede_6px,#c8c8c8)]',
  dark: 'bg-[linear-gradient(#d0d0d8,#bebecb_6px,#a6a5b6_6px,#8f8d9d)]',
};

const Grip = ({ side, y }: { side: 'in' | 'out'; y: number }) => (
  <span
    className={clsx('absolute -mt-1 size-2 rounded-full border-2 border-black bg-white', side === 'in' ? '-left-1' : '-right-1')}
    style={{ top: y }}
  />
);

const Modifier = ({ side, y, up }: { side: 'in' | 'out'; y: number; up?: boolean }) => (
  <span
    className={clsx(
      'absolute -mt-1.5 flex size-3 items-center justify-center rounded-[2px] border border-[#555] bg-gradient-to-b from-[#eee] to-[#aaa]',
      side === 'in' ? 'left-[3px]' : 'right-[3px]',
    )}
    style={{ top: y }}
  >
    <svg viewBox="0 0 10 10" aria-hidden="true" className={clsx('size-2', up && 'rotate-180')} fill="none" stroke="#444" strokeWidth="1.8">
      <path d="M5 0v8M1 5l4 4 4-4" />
    </svg>
  </span>
);

const Tag = ({ x, y, text }: { x: number; y: number; text: string }) => (
  <div className="absolute flex -translate-x-1/2 flex-col items-center" style={{ left: x, top: y }}>
    <div className="flex h-[15px] items-center border border-[#333] bg-gradient-to-b from-[#f6f6f6] to-[#d8d8d8] px-1 whitespace-nowrap">
      {text}
    </div>
    <svg viewBox="0 0 8 5" className="-mt-px h-[5px] w-2" aria-hidden="true">
      <path d="M0 0l4 4 4-4" fill="#d8d8d8" stroke="#333" />
    </svg>
  </div>
);

const Bar = ({ children }: { children: ReactNode }) => (
  <div className="my-px flex h-[15px] shrink-0 items-center justify-center rounded-[2px] border border-black bg-[linear-gradient(#8a8a8a,#5a5a5a_40%,#3c3c3c_40%,#2c2c2c)] font-['Liberation_Sans',sans-serif] text-[10px] leading-none font-bold whitespace-nowrap text-white">
    {children}
  </div>
);

const Choice = ({ id, label, options }: { id: string; label: string; options: string[] }) => (
  <>
    <Bar><label htmlFor={id}>{label}</label></Bar>
    <div className="m-[3px] flex flex-1 rounded-[2px] border border-[#55545f] bg-gradient-to-b from-[#c4c4ce] to-[#8f8d9d] p-px">
      <div className="flex w-full bg-white">
        <select
          id={id}
          className="min-w-0 flex-1 appearance-none border border-[#333] bg-white font-['Liberation_Sans',sans-serif] text-[10px] leading-none text-black italic [text-align-last:center]"
        >
          {options.map((o) => <option key={o}>{o}</option>)}
        </select>
        <span className="w-[9px] border border-l-0 border-[#333]" />
      </div>
    </div>
  </>
);

const zigzag = (w: number, h: number) => {
  const pts: string[] = [];
  for (let y = 0; y < h; y += 4) pts.push(`${(y / 4) % 2 ? w - 1 : w - 4},${y}`);
  pts.push(`${w - 4},${h}`);
  return pts;
};

const tear = (w: number, h: number) =>
  `polygon(0px 0px, ${zigzag(w, h).map((p) => p.split(',').map((v) => `${v}px`).join(' ')).join(', ')}, 0px ${h}px)`;

const Torn = ({ w, h }: { w: number; h: number }) => (
  <svg className="absolute inset-0 h-full w-full" aria-hidden="true">
    <polyline points={zigzag(w, h).join(' ')} fill="none" stroke="#333" />
  </svg>
);

const Labels = ({ items, side, pad }: { items: string[]; side: 'in' | 'out'; pad: boolean }) => (
  <div
    className={clsx(
      'flex h-full flex-col py-px whitespace-nowrap',
      side === 'in' ? 'items-end' : 'items-start',
      side === 'in' && (pad ? 'pl-5' : 'pl-1.5'),
      side === 'out' && (pad ? 'pr-5' : 'pr-2'),
    )}
  >
    {items.map((t, i) => <div key={i} className="flex flex-1 items-center">{t}</div>)}
  </div>
);

function NodeView({ spec: n, children }: { spec: NodeSpec; children?: ReactNode }) {
  const bare = n.ins[0] === '' && n.outs[0] === '';
  return (
    <section className="absolute" style={place(n.box)} aria-label={n.tag ?? n.id}>
      {n.ins.map((_, i) => <Grip key={`i${i}`} side="in" y={portY(n.body, n.ins.length, i)} />)}
      {n.outs.map((_, i) => <Grip key={`o${i}`} side="out" y={portY(n.body, n.outs.length, i)} />)}
      {n.id === 'ltb' && <Grip side="in" y={n.body + 7} />}
      <div
        className={clsx('relative flex h-full flex-col rounded-[3px] border border-[#2e2e35]', SHADE[n.tone])}
        style={n.torn ? { clipPath: tear(n.box.w, n.box.h) } : undefined}
      >
        <div
          className={clsx('flex shrink-0 items-center', bare ? 'justify-center' : 'justify-between', n.torn && 'pr-1.5')}
          style={{ height: n.body - 2 }}
        >
          {!bare && <Labels items={n.ins} side="in" pad={n.flatIn.length + n.graftIn.length > 0} />}
          <Icon name={n.icon} wide={n.icon === 'mass' || n.icon === 'distance' || n.icon === 'flip' || n.icon === 'dupPts'} />
          {!bare && n.outs.length > 0 && <Labels items={n.outs} side="out" pad={n.flatOut.length > 0} />}
        </div>
        {children}
        {n.torn && <Torn w={n.box.w} h={n.box.h} />}
      </div>
      {n.flatIn.map((i) => <Modifier key={`fi${i}`} side="in" y={portY(n.body, n.ins.length, i)} />)}
      {n.graftIn.map((i) => <Modifier key={`gi${i}`} side="in" up y={portY(n.body, n.ins.length, i)} />)}
      {n.flatOut.map((i) => <Modifier key={`fo${i}`} side="out" y={portY(n.body, n.outs.length, i)} />)}
      {(n.id === 'ent1' || n.id === 'ent2') && (
        <div className="relative mx-[5px] flex h-[13px] items-center justify-center rounded-b-[2px] bg-[#262628] text-white">Flatten</div>
      )}
    </section>
  );
}

const ROUND_THUMB =
  '[&::-webkit-slider-thumb]:size-2 [&::-webkit-slider-thumb]:appearance-none [&::-webkit-slider-thumb]:rounded-full [&::-webkit-slider-thumb]:border-2 [&::-webkit-slider-thumb]:border-black [&::-webkit-slider-thumb]:bg-white';
const DIAMOND_THUMB =
  '[&::-webkit-slider-thumb]:size-[6px] [&::-webkit-slider-thumb]:appearance-none [&::-webkit-slider-thumb]:rotate-45 [&::-webkit-slider-thumb]:border [&::-webkit-slider-thumb]:border-black [&::-webkit-slider-thumb]:bg-white';

function Slider({ spec: s }: { spec: SliderSpec }) {
  const trackW = s.box.w - s.nameW - 2;
  const thumb = s.diamond ? 6 : 8;
  const inset = 4 + thumb / 2;
  const percent = ((s.knob - inset) / (trackW - 2 * inset)) * 100;
  return (
    <div className="absolute" style={place(s.box)}>
      <Grip side="out" y={s.box.h / 2} />
      <div className="relative flex h-full overflow-hidden rounded-[3px] border border-[#2e2e35]">
        <label
          htmlFor={s.id}
          className="flex shrink-0 items-center justify-center border-r border-[#2e2e35] bg-[linear-gradient(#c6c6d2,#aeaebd_45%,#9796a7_45%,#8f8d9d)] whitespace-nowrap"
          style={{ width: s.nameW }}
        >
          {s.name}
        </label>
        <div className="relative flex flex-1 items-center bg-gradient-to-b from-[#ededed] to-[#cbcbcb] px-1">
          <div className="absolute inset-x-2 top-1 h-1 border-r border-b border-[#b0b0b0] bg-[repeating-linear-gradient(90deg,#b0b0b0_0_1px,transparent_1px_10px)]" />
          <output
            htmlFor={s.id}
            className="absolute bg-[#dcdcdc] px-0.5 leading-none"
            style={s.before ? { right: trackW - s.knob + 4 } : { left: s.knob + 4 }}
          >
            {s.value}
          </output>
          <input
            id={s.id}
            type="range"
            min="0"
            max="100"
            step="any"
            defaultValue={percent}
            className={clsx('relative h-2 w-full appearance-none bg-transparent', s.diamond ? DIAMOND_THUMB : ROUND_THUMB)}
          />
        </div>
      </div>
    </div>
  );
}

const Plain = ({ id, inputs = 1, outputs = 1, className, children }: { id: string; inputs?: number; outputs?: number; className: string; children: ReactNode }) => {
  const b = plain[id];
  return (
    <div className="absolute" style={place(b)}>
      {Array.from({ length: inputs }, (_, i) => <Grip key={i} side="in" y={portY(b.h, inputs, i)} />)}
      {outputs > 0 && <Grip side="out" y={b.h / 2} />}
      <div className={clsx('relative h-full overflow-hidden rounded-[3px] border border-[#333]', className)}>{children}</div>
    </div>
  );
};

const MONO = "font-['DejaVu_Sans_Mono',monospace]";

function Panels() {
  return (
    <>
      <Plain id="panel1" className={clsx('flex flex-col bg-white text-[9px] leading-none text-[#3c7540]', MONO)}>
        <div className="flex h-4 items-center justify-end bg-[#d6d6d6] pr-3">{'{0}'}</div>
        <div className="flex h-3 items-center gap-1.5 pl-1"><span>0</span><span>34.238678</span></div>
      </Plain>

      <Plain id="expr" inputs={2} className={clsx('flex items-center', SHADE.light)}>
        <div className="flex h-full w-[22px] flex-col items-center py-0.5">
          <span className="flex flex-1 items-center">x</span>
          <span className="flex flex-1 items-center">y</span>
        </div>
        <div className="mx-1 flex h-[34px] w-[116px] items-center justify-center border border-[#333] bg-gradient-to-b from-[#ececec] to-[#dadada] font-['Liberation_Mono',monospace] text-[11px] whitespace-nowrap text-[#444]">
          (x&gt;0) and (x≤y)
        </div>
        <span>Result</span>
      </Plain>

      <Plain id="bool" inputs={0} className="flex">
        <label htmlFor="toggle" className="flex flex-1 items-center justify-center bg-[linear-gradient(#c6c6d2,#aeaebd_45%,#9796a7_45%,#8f8d9d)] whitespace-nowrap">
          Boolean Toggle
        </label>
        <button id="toggle" type="button" className="w-[42px] border-2 border-[#1c1c1c] bg-[linear-gradient(#4a4a4a,#2e2e2e)] font-['Liberation_Mono',monospace] text-[11px] leading-none text-[#ccc]">
          True
        </button>
      </Plain>

      {[['y8', '8'], ['y2', '2'], ['ym', '-2']].map(([id, v]) => (
        <Plain key={id} id={id} className={clsx('flex items-center bg-[#fffb5c] text-[11px] leading-none text-[#4f7a2c]', MONO)}>
          <span className="w-4/5 text-center">{v}</span>
        </Plain>
      ))}

      <Plain id="ypan" className={clsx('flex flex-col bg-[#fffb5c] text-[11px] leading-none text-[#4b6f22]', MONO)}>
        <div className="flex h-5 items-center justify-end bg-[#d2ce4b] pr-3">{'{0;0;0}'}</div>
        <div className="flex h-4 items-center gap-2 pl-1"><span>0</span><span>0.536655</span></div>
      </Plain>

      <Plain id="ppan" className="flex flex-col bg-[#fffb5c]">
        <div className="flex h-[15px] items-center justify-center border-b border-[#333] bg-[#d2ce4b]">Panel</div>
        <div className="flex h-6 items-center pl-2 font-['Liberation_Mono',monospace] text-[9px] leading-none text-[#55702a]">{'Disp={0}'}</div>
      </Plain>
    </>
  );
}

function Galapagos() {
  const b = plain.gal;
  return (
    <div className="absolute" style={place(b)}>
      <Grip side="in" y={10} />
      <span className="absolute -bottom-1 left-[23px] size-2 rounded-full border-2 border-black bg-white" />
      <div
        className="relative flex h-full items-center justify-between rounded-[3px] border border-[#4a0a2a] bg-[linear-gradient(#ff6cbf,#ff50b0_6px,#ff0a8c_6px)] pr-4"
        style={{ clipPath: tear(b.w, b.h) }}
      >
        <div className="flex h-full flex-col pl-1.5">
          <span className="flex flex-1 items-center">Genome</span>
          <span className="flex flex-1 items-center">Fitness</span>
        </div>
        <Icon name="galapagos" />
        <Torn w={b.w} h={b.h} />
      </div>
    </div>
  );
}

/* ---------------------------------------------------------------- footers */

const Dofs = () => (
  <>
    <Bar>Conditions</Bar>
    <fieldset className="m-[3px] flex flex-1 items-center justify-around rounded-[2px] border border-[#55545f] bg-gradient-to-b from-[#c4c4ce] to-[#8f8d9d] px-1.5 font-['Liberation_Sans',sans-serif] text-[10px] leading-none">
      {['Tx', 'Ty', 'Tz', 'Rx', 'Ry', 'Rz'].map((t, i) => (
        <label key={t} className="flex flex-col items-center gap-1">
          {t}
          <input
            type="checkbox"
            defaultChecked={i < 3}
            className="size-[10px] appearance-none rounded-full border border-black bg-white checked:bg-[radial-gradient(#000_2px,#fff_3px)]"
          />
        </label>
      ))}
    </fieldset>
  </>
);

const CheckRow = ({ label, on, value }: { label: string; on: boolean; value: string }) => (
  <>
    <label className="flex flex-1 items-center justify-between px-1.5">
      {label}
      <input type="checkbox" defaultChecked={on} className="size-[9px] appearance-none border border-black bg-white checked:bg-[radial-gradient(#000_2px,#fff_3px)]" />
    </label>
    <div className="flex flex-1 items-center gap-1 border-b border-[#999] pl-7 text-[11px] italic">
      <span className="size-2 rounded-full border-2 border-black bg-white" />
      {value}
    </div>
  </>
);

const ViewScales = () => (
  <>
    <Bar>Display Scales</Bar>
    <div className="m-0.5 flex flex-1 flex-col rounded-[2px] border border-[#777] bg-[#e6e6e6] font-['Liberation_Sans',sans-serif] text-[10px] leading-none">
      <CheckRow label="Deformation" on value="25" />
      <CheckRow label="Reactions" on={false} value="1" />
      <CheckRow label="Loads" on value="0.2" />
      <CheckRow label="Supports" on value="0.2" />
      <CheckRow label="Local axes" on={false} value="1" />
      <CheckRow label="Joints" on value="1" />
    </div>
    <Bar>Render Settings</Bar>
    <Bar>Tags</Bar>
    <Bar>Cross Section Color</Bar>
    <Bar>Result-Case</Bar>
  </>
);

const BeamSettings = () => (
  <>
    <Bar>Section Forces</Bar>
    <Bar>Render Settings</Bar>
    <div className="m-0.5 flex flex-1 flex-col rounded-[2px] border border-[#777] bg-[#e6e6e6] px-1.5 font-['Liberation_Sans',sans-serif] text-[10px] leading-none">
      {['Cross section', 'Axial Stress', 'Utilization', 'Displacement'].map((t) => (
        <label key={t} className="flex flex-1 items-center justify-between">
          {t}
          <input type="radio" name="render" defaultChecked={t === 'Axial Stress'} className="size-[9px] appearance-none rounded-full border border-black bg-white checked:bg-[radial-gradient(#000_2px,#fff_3px)]" />
        </label>
      ))}
      <span className="flex flex-1 items-center">Faces/Cross section</span>
      <span className="flex flex-1 items-center gap-1 pl-1 text-[11px] italic">
        <span className="size-2 rounded-full border-2 border-black bg-white" />2
      </span>
    </div>
  </>
);

const footers: Record<string, ReactNode> = {
  crs: <Choice id="cross-section" label="Cross Section:" options={['O-Section', 'I-Section', 'Box-Section']} />,
  ld1: <Choice id="load-point" label="Type of Load:" options={['Point', 'Gravity']} />,
  ld2: <Choice id="load-gravity" label="Type of Load:" options={['Gravity', 'Point']} />,
  ltb: <Bar>Options</Bar>,
  supp: <Dofs />,
  mv: <ViewScales />,
  bv: <BeamSettings />,
};

/* -------------------------------------------------------------------- app */

const TAG_RISE = px(35);

export default function App() {
  return (
    <main className="relative min-h-[4096px] w-full overflow-hidden bg-white font-['Open_Sans',sans-serif] text-[9px] leading-none text-[#262628]">
      {nodes.map((n) => n.tag && <Tag key={n.id} x={n.box.x + Math.round(n.box.w / 2)} y={n.box.y - TAG_RISE} text={n.tag} />)}
      <Tag x={px(1008)} y={plain.expr.y - TAG_RISE} text="Expression" />
      <Tag x={px(811)} y={plain.gal.y - px(45)} text="Galapagos" />
      <Wires />
      {nodes.map((n) => <NodeView key={n.id} spec={n}>{footers[n.id]}</NodeView>)}
      {sliders.map((s) => <Slider key={s.id} spec={s} />)}
      <Panels />
      <Galapagos />
    </main>
  );
}
